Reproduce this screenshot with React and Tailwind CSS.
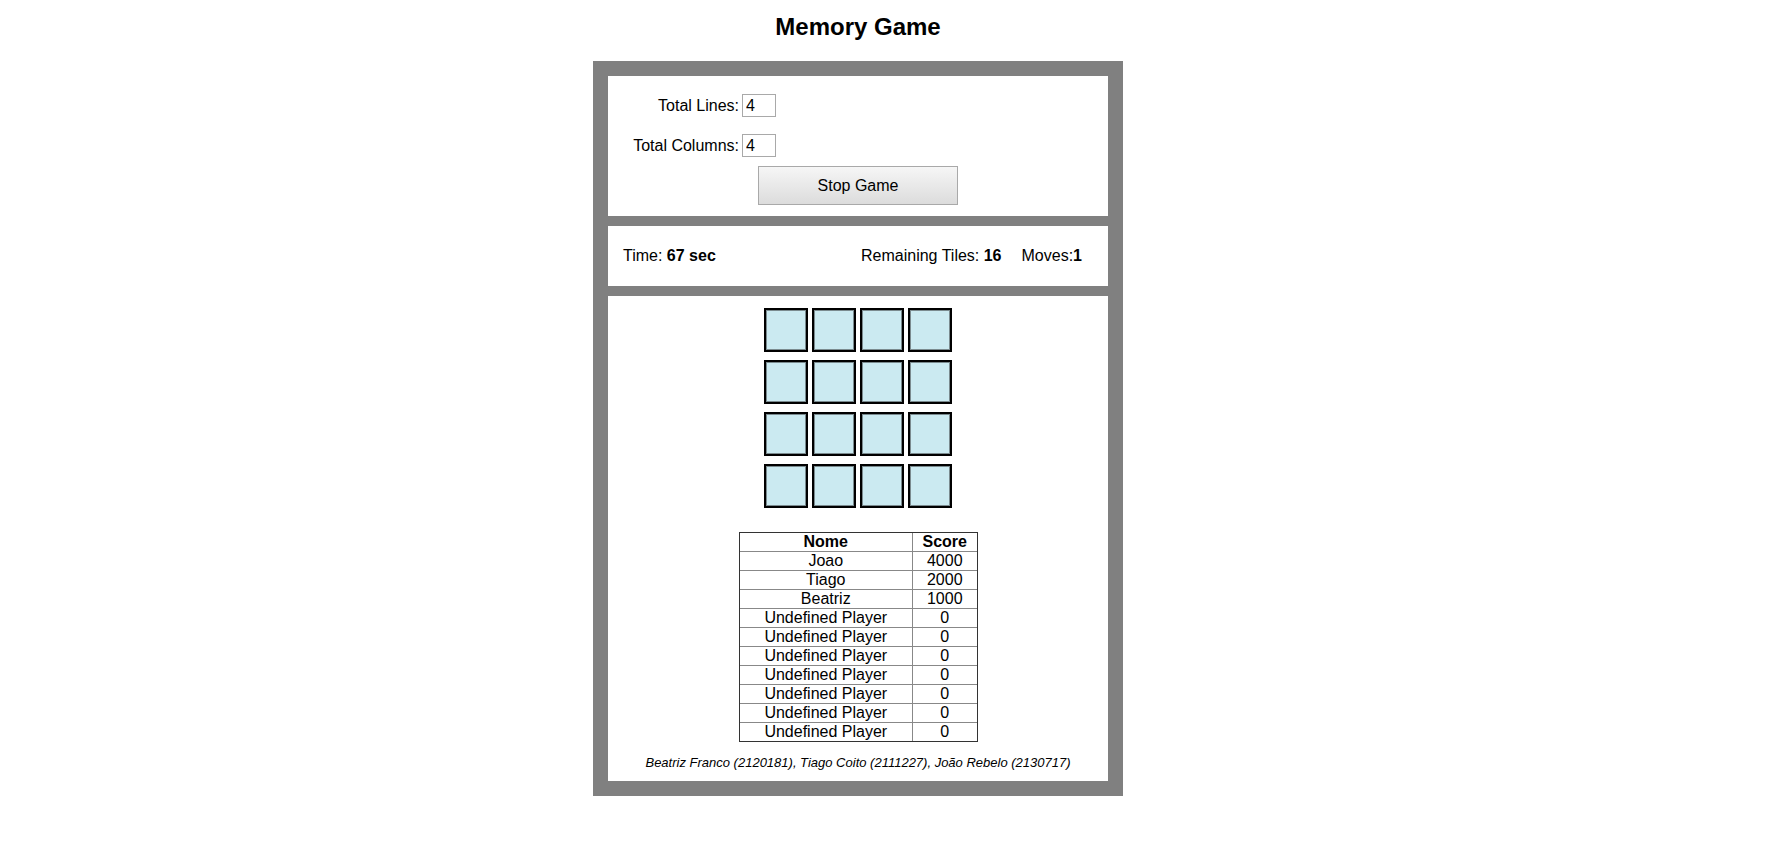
import React from "react";

const players = [
  ["Joao", "4000"],
  ["Tiago", "2000"],
  ["Beatriz", "1000"],
  ["Undefined Player", "0"],
  ["Undefined Player", "0"],
  ["Undefined Player", "0"],
  ["Undefined Player", "0"],
  ["Undefined Player", "0"],
  ["Undefined Player", "0"],
  ["Undefined Player", "0"],
];

function Tile() {
  return (
    <div className="w-[44px] h-[44px] border-2 border-black">
      <div className="w-full h-full border border-[#7b8b8f] bg-[#cbeaf1]" />
    </div>
  );
}

export default function App() {
  return (
    <div className="w-[1716px] min-h-[850px] bg-white flex flex-col items-center pt-[13px] font-['Liberation_Sans',Arial,sans-serif] text-black">
      <h1 className="text-[24px] leading-[28px] font-bold">Memory Game</h1>

      <div className="mt-[20px] w-[530px] bg-[#808080] p-[15px] flex flex-col gap-[10px]">
        {/* Settings */}
        <div className="bg-white h-[140px] pt-[18px] flex flex-col text-[16px]">
          <div className="flex items-center h-[23px]">
            <span className="w-[131px] text-right">Total Lines:</span>
            <input
              className="ml-[3px] w-[34px] h-[23px] border border-[#a9a9a9] px-[3px] text-[16px] outline-none"
              value="4"
              readOnly
            />
          </div>
          <div className="flex items-center h-[23px] mt-[17px]">
            <span className="w-[131px] text-right">Total Columns:</span>
            <input
              className="ml-[3px] w-[34px] h-[23px] border border-[#a9a9a9] px-[3px] text-[16px] outline-none"
              value="4"
              readOnly
            />
          </div>
          <button className="mt-[9px] self-center w-[200px] h-[39px] border border-[#a9a9a9] bg-linear-to-b from-[#f6f6f6] to-[#dcdcdc] text-[16px] text-black">
            Stop Game
          </button>
        </div>

        {/* Stats */}
        <div className="bg-white h-[60px] flex items-center justify-between pl-[15px] pr-[26px] text-[16px]">
          <span>
            Time: <b>67 sec</b>
          </span>
          <div className="flex gap-[20px]">
            <span>
              Remaining Tiles: <b>16</b>
            </span>
            <span>
              Moves:<b>1</b>
            </span>
          </div>
        </div>

        {/* Game */}
        <div className="bg-white pt-[12px] pb-[11px] flex flex-col items-center">
          <div className="grid grid-cols-[repeat(4,44px)] gap-x-[4px] gap-y-[8px]">
            {Array.from({ length: 16 }).map((_, i) => (
              <Tile key={i} />
            ))}
          </div>

          <div className="mt-[24px] border border-[#333333]">
            <table className="w-[237px] border-collapse border-hidden text-[16px]">
              <thead>
                <tr>
                  <th className="w-[173px] p-0 leading-[18px] h-[18px] border border-[#888888] font-bold text-center">
                    Nome
                  </th>
                  <th className="p-0 leading-[18px] h-[18px] border border-[#888888] font-bold text-center">
                    Score
                  </th>
                </tr>
              </thead>
              <tbody>
                {players.map(([n, s], i) => (
                  <tr key={i}>
                    <td className="p-0 leading-[18px] h-[18px] border border-[#888888] text-center">
                      {n}
                    </td>
                    <td className="p-0 leading-[18px] h-[18px] border border-[#888888] text-center">
                      {s}
                    </td>
                  </tr>
                ))}
              </tbody>
            </table>
          </div>

          <p className="mt-[13px] text-[13px] italic leading-[15px]">
            Beatriz Franco (2120181), Tiago Coito (2111227), João Rebelo (2130717)
          </p>
        </div>
      </div>
    </div>
  );
}
